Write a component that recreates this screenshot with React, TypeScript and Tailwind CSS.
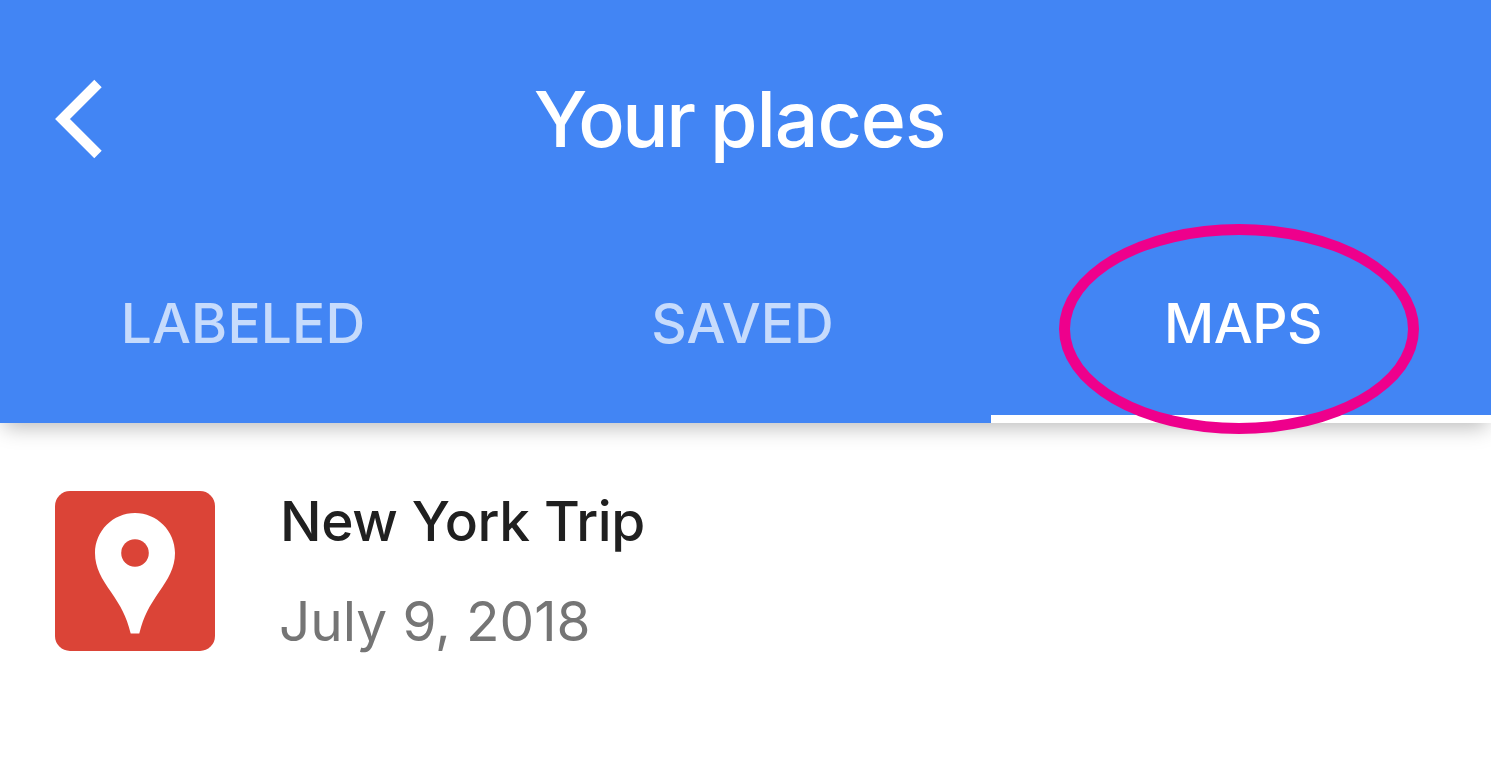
const TABS = [
  { label: "LABELED", className: "pr-[5px] tracking-[0.2px] text-white/70" },
  { label: "SAVED", className: "pl-[3px] tracking-[0.1px] text-white/70" },
  { label: "MAPS", className: "pl-1 tracking-[-0.5px] text-white" },
];

export default function App() {
  return (
    <div className="relative h-[779px] w-[1491px] overflow-hidden bg-white font-['Inter',sans-serif]">
      <header className="relative flex h-[423px] flex-col bg-[#4285f4] shadow-[0_8px_20px_-4px_rgba(0,0,0,0.28)]">
        <div className="grid h-[238px] grid-cols-[200px_1fr_200px] items-center">
          <button type="button" aria-label="Back" className="pl-[54px]">
            <BackIcon />
          </button>
          <h1 className="pr-3 text-center text-[77px] leading-none font-medium tracking-[-1.1px] whitespace-nowrap text-white [word-spacing:-3px]">
            <span className="tracking-[-2.4px]">Your</span> places
          </h1>
        </div>
        <nav className="grid flex-1 grid-cols-[491px_500px_500px]">
          {TABS.map((tab) => (
            <Tab key={tab.label} {...tab} active={tab.label === "MAPS"} />
          ))}
        </nav>
      </header>

      <main className="px-[55px] pt-[68px]">
        <MapRow title="New York Trip" date="July 9, 2018" />
      </main>

      {/* callout around the active tab */}
      <div className="absolute top-[224px] left-[1059px] h-[210px] w-[360px] rounded-[50%] border-[11px] border-[#ee008c]" />
    </div>
  );
}

function Tab({
  label,
  className,
  active,
}: {
  label: string;
  className: string;
  active?: boolean;
}) {
  return (
    <button
      type="button"
      className={`flex flex-col border-b-8 text-[55px] font-[450] ${active ? "border-white" : "border-transparent"}`}
    >
      <span className={`flex h-[171px] w-full items-center justify-center leading-none ${className}`}>
        {label}
      </span>
    </button>
  );
}

function MapRow({ title, date }: { title: string; date: string }) {
  return (
    <div className="flex gap-16">
      <PinIcon />
      <div className="pt-0.5 text-[55px] leading-[56px] whitespace-nowrap">
        <p className="pl-px font-medium tracking-[-0.4px] text-[#202020]">{title}</p>
        <p className="mt-11 tracking-[-0.1px] text-[#757575]">{date}</p>
      </div>
    </div>
  );
}

function BackIcon() {
  return (
    <svg width="48" height="80" viewBox="0 0 48 80" fill="none">
      <path d="M44 4.5 8.5 40 44 75.500" stroke="#fff" strokeWidth="10.5" />
    </svg>
  );
}

function PinIcon() {
  return (
    <svg width="160" height="160" viewBox="0 0 160 160" className="shrink-0">
      <rect width="160" height="160" rx="15" fill="#db4437" />
      <path
        d="M80 22C58 22 40 40 40 62C40 77 47 88 56 101C66 116 71 124 75.7 142.5H84.3C89 124 94 116 104 101C113 88 120 77 120 62C120 40 102 22 80 22Z"
        fill="#fff"
      />
      <circle cx="80" cy="62" r="13.8" fill="#db4437" />
    </svg>
  );
}
